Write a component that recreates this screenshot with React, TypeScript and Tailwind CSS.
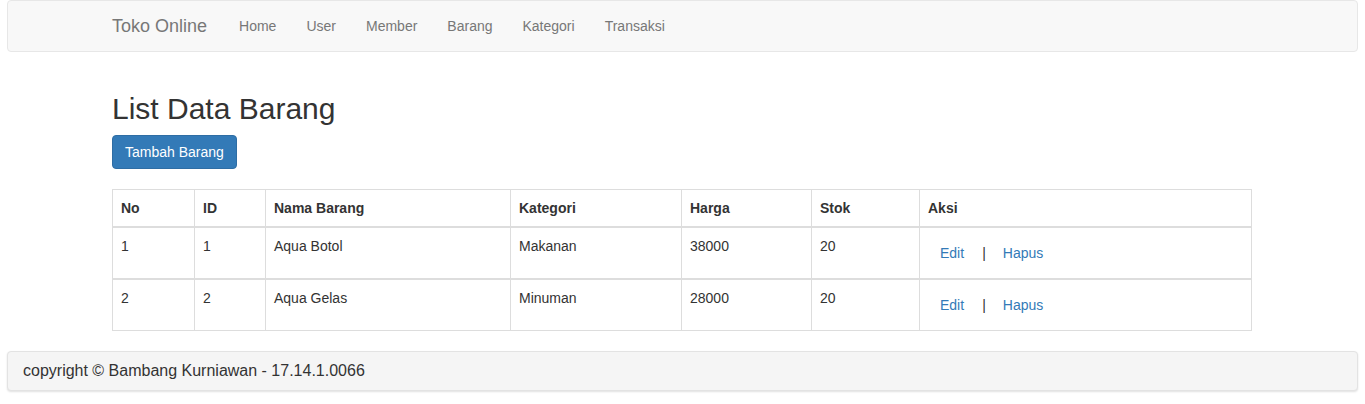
import React from "react";

const rows = [
  { no: 1, id: 1, nama: "Aqua Botol", kat: "Makanan", harga: 38000, stok: 20 },
  { no: 2, id: 2, nama: "Aqua Gelas", kat: "Minuman", harga: 28000, stok: 20 },
];

export default function App() {
  const font = { fontFamily: '"Liberation Sans", Arial, Helvetica, sans-serif' };
  return (
    <div className="bg-white text-[14px] leading-[20px] text-[#333]" style={font}>
      <div className="mx-[7px]">
        <nav className="h-[52px] bg-[#f8f8f8] border border-[#e7e7e7] rounded-[4px]">
          <div className="w-[1171px] mx-auto px-[15px] flex items-center h-[50px]">
            <span className="text-[18px] leading-[20px] text-[#777] pr-[17px]">Toko Online</span>
            {["Home", "User", "Member", "Barang", "Kategori", "Transaksi"].map((l) => (
              <span key={l} className="px-[15px] text-[#777] text-[14px]">{l}</span>
            ))}
          </div>
        </nav>
      </div>

      <div className="w-[1171px] mx-auto px-[15px] pt-[20px]">
        <h2 className="text-[30px] leading-[33px] font-medium mt-[20px] mb-[10px] text-[#333]">List Data Barang</h2>
        <button className="bg-[#337ab7] border border-[#2e6da4] text-white rounded-[4px] px-[12px] py-[6px] text-[14px] leading-[20px]">
          Tambah Barang
        </button>

        <table className="mt-[20px] mb-[20px] w-[1140px] table-fixed border-collapse border border-[#ddd]">
          <colgroup>
            <col className="w-[82px]" />
            <col className="w-[71px]" />
            <col className="w-[245px]" />
            <col className="w-[171px]" />
            <col className="w-[130px]" />
            <col className="w-[108px]" />
            <col />
          </colgroup>
          <thead>
            <tr>
              {["No", "ID", "Nama Barang", "Kategori", "Harga", "Stok", "Aksi"].map((h) => (
                <th key={h} className="text-left font-bold p-[8px] border border-[#ddd] border-b-2 align-bottom">{h}</th>
              ))}
            </tr>
          </thead>
          {rows.map((r) => (
            <tbody key={r.no} className="border-t-2 border-[#ddd]">
              <tr>
                <td className="p-[8px] border border-[#ddd] align-top">{r.no}</td>
                <td className="p-[8px] border border-[#ddd] align-top">{r.id}</td>
                <td className="p-[8px] border border-[#ddd] align-top">{r.nama}</td>
                <td className="p-[8px] border border-[#ddd] align-top">{r.kat}</td>
                <td className="p-[8px] border border-[#ddd] align-top">{r.harga}</td>
                <td className="p-[8px] border border-[#ddd] align-top">{r.stok}</td>
                <td className="p-[8px] border border-[#ddd] align-top">
                  <div className="flex items-center">
                    <span className="px-[12px] py-[7px] text-[#337ab7] leading-[20px]">Edit</span>
                    <span className="ml-[6px] text-[#333]">|</span>
                    <span className="ml-[5px] px-[12px] py-[7px] text-[#337ab7] leading-[20px]">Hapus</span>
                  </div>
                </td>
              </tr>
            </tbody>
          ))}
        </table>
      </div>

      <div className="mx-[7px] pb-[12px]">
        <div className="bg-[#f5f5f5] border border-[#e3e3e3] rounded-[4px] shadow-[0_1px_2px_rgba(0,0,0,0.12)] px-[15px] py-[8px] text-[16px] leading-[22px] text-[#333]">
          copyright © Bambang Kurniawan - 17.14.1.0066
        </div>
      </div>
    </div>
  );
}
